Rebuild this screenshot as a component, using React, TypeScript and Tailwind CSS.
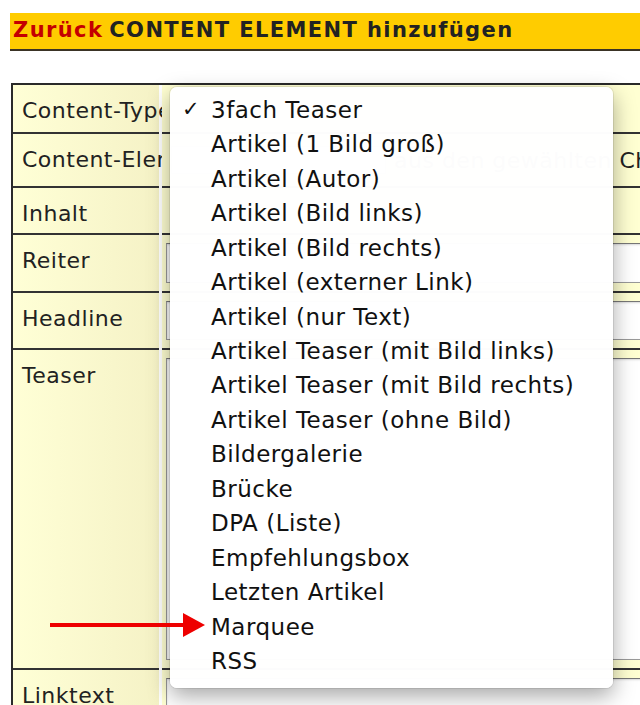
import React from 'react';

const menuItems = [
  '3fach Teaser',
  'Artikel (1 Bild groß)',
  'Artikel (Autor)',
  'Artikel (Bild links)',
  'Artikel (Bild rechts)',
  'Artikel (externer Link)',
  'Artikel (nur Text)',
  'Artikel Teaser (mit Bild links)',
  'Artikel Teaser (mit Bild rechts)',
  'Artikel Teaser (ohne Bild)',
  'Bildergalerie',
  'Brücke',
  'DPA (Liste)',
  'Empfehlungsbox',
  'Letzten Artikel',
  'Marquee',
  'RSS',
];

type Row = { label: string; h: string; input?: boolean; content?: React.ReactNode };

const rows: Row[] = [
  { label: 'Content-Type', h: 'h-[49px]' },
  {
    label: 'Content-Element',
    h: 'h-[54px]',
    content: (
      <div className="flex items-center h-full pl-[9px] whitespace-nowrap">
        <div className="w-[215px] h-[28px] border border-[#bbb] bg-white shrink-0" />
        <span className="ml-[8px] text-[22px] tracking-[0.5px] text-[#222]">aus den gewählten Channels</span>
      </div>
    ),
  },
  { label: 'Inhalt', h: 'h-[47px]' },
  { label: 'Reiter', h: 'h-[58px]', input: true },
  { label: 'Headline', h: 'h-[57px]', input: true },
  { label: 'Teaser', h: 'h-[320px]', input: true },
  { label: 'Linktext', h: 'h-[58px]', input: true },
];

const App: React.FC = () => {
  return (
    <div
      className="relative w-[640px] h-[705px] overflow-hidden bg-white"
      style={{ fontFamily: "'DejaVu Sans', 'Liberation Sans', sans-serif" }}
    >
      {/* Header bar */}
      <div className="mt-[13px] ml-[10px] h-[38px] bg-[#ffcc00] border-b-2 border-[#3a3325] flex items-center pl-[3px] whitespace-nowrap">
        <span className="text-[21px] tracking-[1.4px] font-bold text-[#c40000]">Zurück</span>
        <span className="text-[21px] tracking-[1.4px] font-bold text-[#222] ml-[6px]">CONTENT ELEMENT hinzufügen</span>
      </div>

      {/* Form table */}
      <div className="mt-[32px] ml-[11px] w-[700px] border-l-2 border-t-2 border-[#2a2a2a]">
        {rows.map((row, i) => (
          <div key={i} className={`flex gap-[3px] ${row.h}`}>
            <div className="w-[146px] shrink-0 border-b-2 border-[#333] bg-gradient-to-r from-[#ffffd6] to-[#f5f2c6] pl-[9px] pt-[14px]">
              <span className="text-[22px] tracking-[0.5px] leading-[24px] text-[#222] whitespace-nowrap">{row.label}</span>
            </div>
            <div className="flex-1 border-b-2 border-[#333] bg-[#ffffd2] overflow-hidden">
              {row.input ? (
                <div className="h-full pl-[4px] py-[8px]">
                  <div className="h-full border border-[#999] border-t-[#777] bg-white shadow-[inset_0_1px_2px_rgba(0,0,0,0.15)]" />
                </div>
              ) : (
                row.content
              )}
            </div>
          </div>
        ))}
      </div>

      {/* Popup menu */}
      <div className="absolute left-[170px] top-[87px] w-[443px] h-[601px] rounded-[7px] bg-white/[0.985] shadow-[0_8px_22px_rgba(0,0,0,0.35),0_0_0_1px_rgba(0,0,0,0.08)] pt-[6px]">
        {menuItems.map((item, i) => (
          <div key={i} className="relative h-[34.44px] flex items-center pl-[41px] text-[23px] tracking-[0.5px] text-[#111] whitespace-nowrap">
            {i === 0 && <span className="absolute left-[12px] text-[21px] font-bold">✓</span>}
            {item}
          </div>
        ))}
      </div>

      {/* Red arrow */}
      <svg className="absolute left-[48px] top-[610px]" width="160" height="30" viewBox="0 0 160 30">
        <line x1="2" y1="15" x2="138" y2="15" stroke="#ee0000" strokeWidth="4" />
        <polygon points="135,3 157,15 135,27" fill="#ee0000" />
      </svg>
    </div>
  );
};

export default App;
